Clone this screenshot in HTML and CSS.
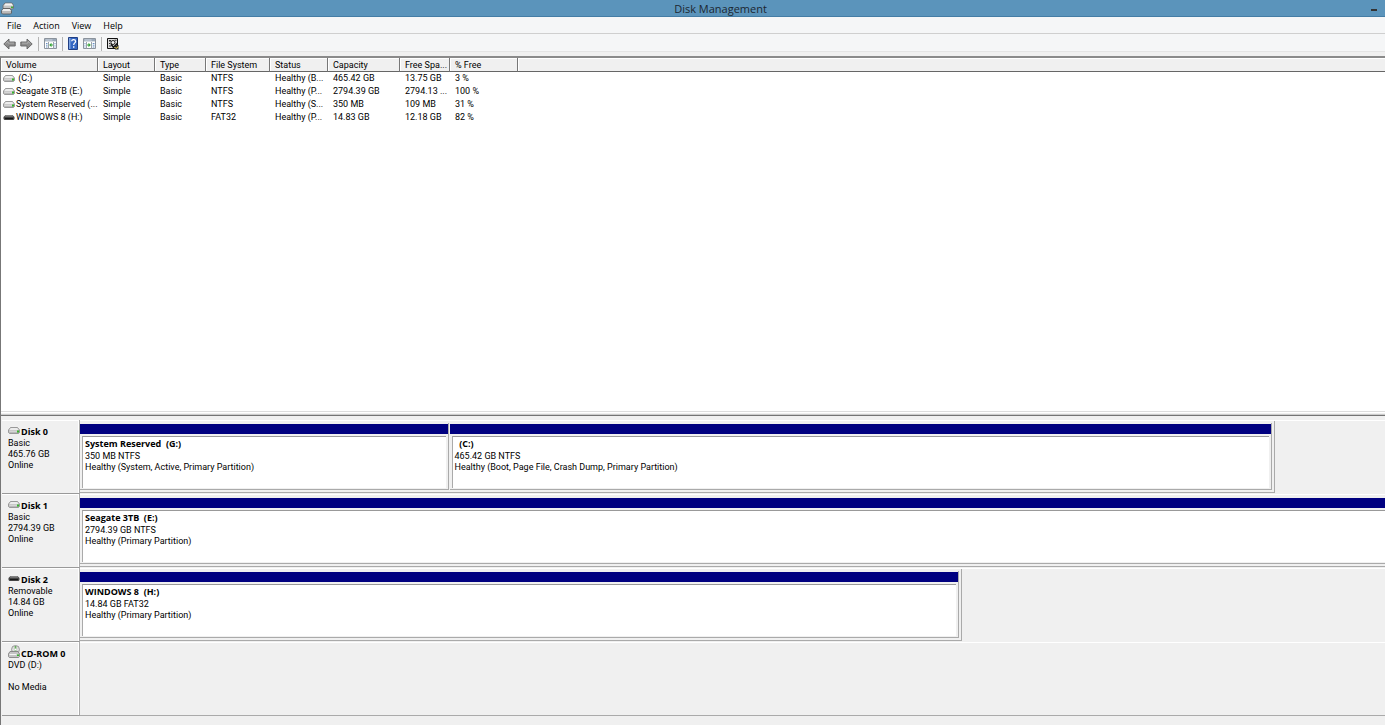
FILE: index.html
```html
<!DOCTYPE html>
<html lang="en">
<head>
<meta charset="utf-8">
<title>Disk Management</title>
<link rel="stylesheet" href="styles.css">
</head>
<body>
<svg class="defs" aria-hidden="true">
  <symbol id="drive" viewBox="0 0 12 7">
    <path d="M2.5.5h7l2 2.5v2.5l-1 1h-9l-1-1V3z" fill="#b4b4b4" stroke="#8a8a8a" stroke-width=".8"/>
    <path d="M2.8 1h6.4L11 3.2H1z" fill="#ececec"/><path d="M1.2 3.6h8v1.6h-8z" fill="#d6d6d6"/>
    <path d="M9 3.4h2v2H9z" fill="#35b52a"/>
  </symbol>
  <symbol id="removable" viewBox="0 0 12 7">
    <path d="M2.5 1h7l2 2v2l-1 1h-9l-1-1V3z" fill="#444"/>
    <path d="M2.7 1.2h6.6l1 1.2H1.7z" fill="#999"/><path d="M2 4h8v1H2z" fill="#171717"/>
  </symbol>
  <symbol id="cdrom" viewBox="0 0 12 13">
    <circle cx="7.5" cy="4.5" r="4" fill="#ddd" stroke="#888" stroke-width=".8"/>
    <path d="M7.5 1v5" stroke="#67ae5d" stroke-width="1.6"/><circle cx="7.5" cy="4.5" r="1" fill="#fff"/>
    <path d="M2 6.5h8l1.6 2.5v2.5l-1 1h-9.2l-1-1V9z" fill="#c5c5c5" stroke="#777" stroke-width=".8"/>
    <path d="M1.5 9.5h7" stroke="#f5f5f5"/><path d="M9 9.5h2v1.5H9z" fill="#35b52a"/>
  </symbol>
  <symbol id="arrow" viewBox="0 0 13 12">
    <path d="M.8 6 6 1v3h6.2v4H6v3z" fill="#8d8d8d" stroke="#626262" stroke-width=".9" stroke-linejoin="round"/>
    <path d="M2.5 5.7 5 3.3v1.8h6" fill="none" stroke="#b5b5b5" stroke-width=".8"/>
  </symbol>
</svg>
<div class="window">
  <header class="titlebar">
    <svg class="app-icon" viewBox="0 0 13 13"><path d="M4 1h7l1.5 2.5V6l-1 1H3L2 6V3.5z" fill="#c4c4c4" stroke="#666" stroke-width=".8"/><path d="M4.4 1.5h6.2l1.4 2H3z" fill="#f3f3f3"/><path d="M2 6.5h7L10.5 9v2l-1 1h-8l-1-1V9z" fill="#bbb" stroke="#555" stroke-width=".8"/><path d="M2.3 7h6.4L10 9H1z" fill="#eee"/><path d="M10 4.5h2V6h-2z" fill="#3caf35"/></svg>
    <h1 class="title">Disk Management</h1>
    <button class="minimize" aria-label="Minimize"><span class="dash"></span></button>
  </header>
  <nav class="menubar">
    <button class="menu">File</button><button class="menu">Action</button><button class="menu">View</button><button class="menu">Help</button>
  </nav>
  <div class="toolbar">
    <div class="history">
      <button class="tool" aria-label="Back"><svg class="arrow"><use href="#arrow"/></svg></button>
      <button class="tool" aria-label="Forward"><svg class="arrow flip"><use href="#arrow"/></svg></button>
    </div>
    <span class="divider"></span>
    <button class="tool" aria-label="Show console tree"><svg class="pane-icon" viewBox="0 0 13 11"><path d="M.5.5h12v10H.5z" fill="#fff" stroke="#8b939c"/><path d="M1 1h11v2.4H1z" fill="#9aa9ba"/><path d="M1.5 2h7" stroke="#dfe6ee" stroke-width=".8"/><path d="M4.5 4v6.5M9.5 4v6.5" stroke="#9aa2aa"/><path d="M2 5.5h1.5M2 7.2h1.5M2 9h1.5M10.5 5.5h1M10.5 7.2h1M10.5 9h1" stroke="#5785bd" stroke-width=".9"/><path d="m5.2 7 2.3-2.3v4.6z" fill="#35a53a"/><path d="M7 6.4h2v1.2H7z" fill="#35a53a"/></svg></button>
    <span class="divider"></span>
    <button class="tool" aria-label="Help"><svg class="help-icon" viewBox="0 0 10 13"><path d="M.5.5h9v12h-9z" fill="#3467c4" stroke="#213f84"/><path d="M1 1h1.5v11H1z" fill="#7ca3e1"/><path d="M3.7 4.3c.1-2.2 3.9-2.1 3.9.1 0 1.5-1.9 1.5-1.9 3.6" fill="none" stroke="#fff" stroke-width="1.3"/><path d="M5 9.2h1.4v1.5H5z" fill="#fff"/></svg></button>
    <button class="tool" aria-label="Show action pane"><svg class="pane-icon" viewBox="0 0 13 11"><path d="M.5.5h12v10H.5z" fill="#fff" stroke="#8b939c"/><path d="M1 1h11v2.4H1z" fill="#9aa9ba"/><path d="M1.5 2h7" stroke="#dfe6ee" stroke-width=".8"/><path d="M3.5 4v6.5M8.5 4v6.5" stroke="#9aa2aa"/><path d="M1.5 5.5h1M1.5 7.2h1M1.5 9h1M9.7 5.5h1.8M9.7 7.2h1.8M9.7 9h1.8" stroke="#5785bd" stroke-width=".9"/><path d="M7.8 7 5.5 4.7v4.6z" fill="#35a53a"/><path d="M4.2 6.4h2v1.2h-2z" fill="#35a53a"/></svg></button>
    <span class="divider"></span>
    <button class="tool" aria-label="Settings"><svg class="set-icon" viewBox="0 0 12 12"><path d="M.5.5h10v10H.5z" fill="#ddd" stroke="#111"/><path d="M2 2h2v1.5H2zM2 5h1.5v1H2zM2 7.5h2v1H2zM7.5 1.8h2v1h-2z" fill="#333"/><circle cx="6" cy="4.5" r="2" fill="#f4f4f4" stroke="#222"/><path d="m4 6.3 2.5 3 4-4" fill="none" stroke="#111" stroke-width="1.5"/><path d="m7.5 8 4-1v4.5H8z" fill="#222"/><path d="m7.5 9.5 2.5.8 1-2" fill="none" stroke="#e2cc55"/></svg></button>
  </div>
  <main class="console">
    <section class="volumes" aria-label="Volumes">
      <table class="volume-table">
        <colgroup><col class="c-volume"><col class="c-layout"><col class="c-type"><col class="c-fs"><col class="c-status"><col class="c-capacity"><col class="c-free"><col class="c-percent"><col></colgroup>
        <thead><tr><th>Volume</th><th>Layout</th><th>Type</th><th>File System</th><th>Status</th><th>Capacity</th><th>Free Spa...</th><th>% Free</th><th></th></tr></thead>
        <tbody>
          <tr><td><svg class="drive"><use href="#drive"/></svg>&nbsp;(C:)</td><td>Simple</td><td>Basic</td><td>NTFS</td><td>Healthy (B...</td><td>465.42 GB</td><td>13.75 GB</td><td>3 %</td><td></td></tr>
          <tr><td><svg class="drive"><use href="#drive"/></svg>Seagate 3TB (E:)</td><td>Simple</td><td>Basic</td><td>NTFS</td><td>Healthy (P...</td><td>2794.39 GB</td><td>2794.13 ...</td><td>100 %</td><td></td></tr>
          <tr><td><svg class="drive"><use href="#drive"/></svg>System Reserved (...</td><td>Simple</td><td>Basic</td><td>NTFS</td><td>Healthy (S...</td><td>350 MB</td><td>109 MB</td><td>31 %</td><td></td></tr>
          <tr><td><svg class="drive"><use href="#removable"/></svg>WINDOWS 8 (H:)</td><td>Simple</td><td>Basic</td><td>FAT32</td><td>Healthy (P...</td><td>14.83 GB</td><td>12.18 GB</td><td>82 %</td><td></td></tr>
        </tbody>
      </table>
    </section>
    <div class="splitter"></div>
    <section class="disks" aria-label="Disks">
      <article class="disk">
        <div class="disk-info"><h2 class="name"><svg class="drive"><use href="#drive"/></svg>Disk 0</h2><p>Basic</p><p>465.76 GB</p><p>Online</p></div>
        <div class="track"><div class="graph size-0">
          <div class="partition part-reserved"><div class="bar"></div><div class="box"><h3>System Reserved&nbsp; (G:)</h3><p>350 MB NTFS</p><p>Healthy (System, Active, Primary Partition)</p></div></div>
          <div class="partition part-system"><div class="bar"></div><div class="box"><h3>&nbsp; (C:)</h3><p>465.42 GB NTFS</p><p>Healthy (Boot, Page File, Crash Dump, Primary Partition)</p></div></div>
        </div></div>
      </article>
      <article class="disk">
        <div class="disk-info"><h2 class="name"><svg class="drive"><use href="#drive"/></svg>Disk 1</h2><p>Basic</p><p>2794.39 GB</p><p>Online</p></div>
        <div class="track"><div class="graph size-1">
          <div class="partition"><div class="bar"></div><div class="box"><h3>Seagate 3TB&nbsp; (E:)</h3><p>2794.39 GB NTFS</p><p>Healthy (Primary Partition)</p></div></div>
        </div></div>
      </article>
      <article class="disk">
        <div class="disk-info"><h2 class="name"><svg class="drive"><use href="#removable"/></svg>Disk 2</h2><p>Removable</p><p>14.84 GB</p><p>Online</p></div>
        <div class="track"><div class="graph size-2">
          <div class="partition"><div class="bar"></div><div class="box"><h3>WINDOWS 8&nbsp; (H:)</h3><p>14.84 GB FAT32</p><p>Healthy (Primary Partition)</p></div></div>
        </div></div>
      </article>
      <article class="disk">
        <div class="disk-info"><h2 class="name"><svg class="cdrom"><use href="#cdrom"/></svg>CD-ROM 0</h2><p>DVD (D:)</p><p>&nbsp;</p><p>No Media</p></div>
        <div class="track empty"></div>
      </article>
    </section>
  </main>
</div>
</body>
</html>
```
FILE: styles.css
```css
* { box-sizing: border-box; }
body { margin: 0; font: 9px/11px Roboto, "Open Sans", sans-serif; color: #000; background: #f0f0f0; }
h1, h2, h3, p { margin: 0; font-size: inherit; }
h2, h3 { font-family: "Open Sans", "Noto Sans", sans-serif; }
button { border: 0; padding: 0; background: none; font: inherit; color: inherit; }
svg { display: block; flex: none; }
.defs { display: none; }
.window { display: flex; flex-direction: column; height: 100vh; overflow: hidden; }

.titlebar { display: grid; grid-template-columns: 70px 1fr 6px; align-items: center; height: 17px; padding-right: 8px; background: #5b94bb; border-bottom: 1px solid #447da5; }
.app-icon { width: 13px; height: 13px; margin-left: 1px; }
.title { padding-top: 1px; font: 11px/16px "Open Sans", "Noto Sans", sans-serif; text-align: center; color: #1b2731; }
.minimize { height: 16px; padding-top: 2px; }
.dash { display: block; width: 6px; height: 2px; background: #333; }

.menubar { display: flex; gap: 12px; height: 17px; padding: 0 7px; background: #f5f6f7; border-bottom: 1px solid #cfcfcf; font-family: "Open Sans", "Noto Sans", sans-serif; }
.toolbar { display: flex; align-items: center; gap: 5px; height: 18px; padding: 2px 0 0 3px; background: #f5f6f7; border-bottom: 1px solid #e4e4e4; }
.history { display: flex; gap: 4px; }
.tool { display: flex; align-items: center; }
.arrow { width: 13px; height: 12px; }
.flip { transform: scaleX(-1); }
.divider { width: 1px; height: 14px; background: #b4b4b4; }
.pane-icon { width: 13px; height: 11px; }
.help-icon { width: 10px; height: 13px; }
.set-icon { width: 12px; height: 12px; }

.console { display: flex; flex-direction: column; flex: 1; margin-top: 4px; border-left: 1px solid #777; border-top: 2px solid #8a8a8a; min-height: 0; }
.volumes { flex: 1; background: #fff; min-height: 0; }
.volume-table { width: 100%; table-layout: fixed; border-collapse: separate; border-spacing: 0; }
.c-volume { width: 97px; } .c-layout { width: 57px; } .c-type { width: 51px; } .c-fs { width: 64px; } .c-status { width: 58px; } .c-capacity { width: 72px; } .c-free { width: 50px; } .c-percent { width: 68px; }
th { height: 14px; padding: 2px 0 0 5px; line-height: 11px; font-weight: 400; text-align: left; white-space: nowrap; background: #f0f0f0; border-right: 1px solid #777; border-bottom: 1px solid #666; box-shadow: inset 1px 1px #fff; }
th:last-child { border-right: 0; }
td { height: 13px; padding: 0 0 0 5px; line-height: 13px; white-space: nowrap; }
td:first-child { display: flex; align-items: center; gap: 1px; padding-left: 2px; }
.drive { width: 12px; height: 7px; }
.cdrom { width: 12px; height: 13px; }

.splitter { height: 5px; background: #f0f0f0; border-top: 1px solid #ddd; border-bottom: 1px solid #747474; box-shadow: inset 0 1px #fff, inset 0 -1px #ccc; }
.disks { flex: none; padding: 4px 0 9px 1px; background: #f0f0f0; }
.disk { display: grid; grid-template-columns: 78px 1fr; height: 74px; }
.disk-info { padding: 6px 0 0 6px; border-right: 1px solid #aaa; border-bottom: 1px solid #999; box-shadow: inset -1px 1px #fff; }
.name { display: flex; align-items: center; gap: 1px; height: 11px; margin-bottom: 1px; font-weight: 700; white-space: nowrap; }
.name .drive { margin-bottom: 2px; }
.name .cdrom { margin-bottom: 4px; }
.track { min-width: 0; overflow: hidden; border-top: 1px solid #fff; }
.empty { border-bottom: 1px solid #aaa; }
.graph { display: flex; gap: 1px; height: 72px; padding: 2px 2px 2px 0; border: solid #aaa; border-width: 0 1px 1px 0; }
.size-0 { width: 91.6%; }
.size-1 { width: 102%; }
.size-2 { width: 67.6%; }
.partition { display: flex; flex-direction: column; gap: 2px; flex: 1; min-width: 0; padding: 1px 0 1px; border: solid #aaa; border-width: 0 1px 1px 0; }
.part-reserved { flex: 368 1 0; }
.part-system { flex: 823 1 0; }
.bar { height: 10px; background: #000080; }
.box { flex: 1; margin: 0 2px; padding: 1px 0 0 2px; background: #fff; border-left: 1px solid #aaa; border-top: 1px solid #999; white-space: nowrap; overflow: hidden; }
.box h3 { margin-bottom: 2px; }
```
